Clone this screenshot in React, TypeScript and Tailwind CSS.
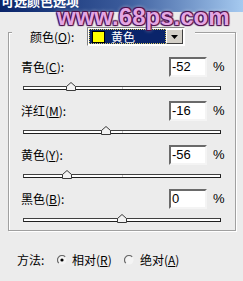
import React from "react";

type Row = { pre: string; key: string; value: number };

const rows: Row[] = [
  { pre: "青色(", key: "C", value: -52 },
  { pre: "洋红(", key: "M", value: -16 },
  { pre: "黄色(", key: "Y", value: -56 },
  { pre: "黑色(", key: "B", value: 0 },
];

const font = "font-['Noto_Sans_CJK_SC','Liberation_Sans',sans-serif]";

const Slider: React.FC<{ value: number }> = ({ value }) => (
  <div className="relative mx-[14px] mt-[9px] h-[4px] border border-t-[#404040] border-l-[#404040] border-b-[#202020] border-r-[#202020] bg-white">
    <div className="absolute left-1/2 top-0 h-full w-px bg-[#c8c8c8]" />
    <svg
      className="absolute top-[-5px] -translate-x-1/2"
      style={{ left: `${(value + 100) / 2}%` }}
      width="10"
      height="9"
      viewBox="0 0 10 9"
    >
      <path d="M0.5 8.5V4.5L5 0.5L9.5 4.5V8.5Z" fill="#f2f2f2" stroke="#3a3a3a" />
    </svg>
  </div>
);

const Radio: React.FC<{ checked?: boolean }> = ({ checked }) => (
  <svg width="10" height="10" viewBox="0 0 10 10">
    <circle cx="5" cy="5" r="4.5" fill="#f4f4f4" />
    <path d="M8.2 1.8A4.5 4.5 0 0 0 1.8 8.2" fill="none" stroke="#6a6a6a" strokeWidth="1.2" />
    {checked && <circle cx="5" cy="5" r="1.6" fill="#000" />}
  </svg>
);

export default function App() {
  return (
    <div className={`relative h-[281px] w-[243px] overflow-hidden bg-[#ececec] text-[12px] text-black ${font}`}>
      {/* title bar */}
      <div className="h-[12px] overflow-hidden bg-linear-to-r from-[#0a246a] via-[#3a5a9a] to-[#a6caf0]">
        <div className="-mt-[7px] pl-[1px] text-[13px] font-bold leading-[16px] text-white">可选颜色选项</div>
      </div>

      {/* group box */}
      <div className="ml-[8px] mt-[20px] w-[228px] border border-[#a0a0a0] pb-[8px] shadow-[inset_1px_1px_0_#fff,1px_1px_0_#fff]">
        <div className="-mt-[6px] ml-[3px] flex w-fit items-center bg-[#ececec] pl-[18px] pr-[10px]">
          <span className="w-[57px] leading-[19px]">
            颜色(<u>O</u>):
          </span>
          <div className="flex h-[19px] w-[98px] items-center border border-t-[#808080] border-l-[#808080] border-b-white border-r-white bg-white p-[1px]">
            <div className="flex h-full flex-1 items-center border border-dotted border-[#d8c860] bg-[#0a246a] pl-[2px]">
              <div className="h-[12px] w-[13px] border border-black bg-[#ffff00]" />
              <span className="ml-[6px] leading-[14px] text-white">黄色</span>
            </div>
            <div className="flex h-full w-[17px] items-center justify-center border border-t-white border-l-white border-b-[#404040] border-r-[#404040] bg-[#d4d0c8]">
              <svg width="7" height="4" viewBox="0 0 7 4">
                <path d="M0 0H7L3.5 4Z" fill="#000" />
              </svg>
            </div>
          </div>
        </div>

        {rows.map((r) => (
          <div key={r.key} className="mt-[11px]">
            <div className="flex h-[20px] items-center pl-[12px]">
              <span className="flex-1 leading-[14px]">
                {r.pre}
                <u>{r.key}</u>):
              </span>
              <div className="flex h-[20px] w-[38px] items-center border-2 border-t-[#6a6a6a] border-l-[#6a6a6a] border-b-[#f4f4f4] border-r-[#f4f4f4] bg-white pl-[1px] font-['Liberation_Sans',sans-serif] text-[13px] leading-[16px]">
                {r.value}
              </div>
              <span className="w-[28px] pl-[6px] font-['Liberation_Sans',sans-serif] text-[13px]">%</span>
            </div>
            <Slider value={r.value} />
          </div>
        ))}
      </div>

      {/* method */}
      <div className="mt-[21px] flex h-[16px] items-center pl-[17px]">
        <span className="w-[40px]">方法:</span>
        <Radio checked />
        <span className="ml-[5px] w-[41px]">
          相对(<u>R</u>)
        </span>
        <span className="ml-[11px] flex">
          <Radio />
        </span>
        <span className="ml-[6px]">
          绝对(<u>A</u>)
        </span>
      </div>

      {/* watermark */}
      <div className="absolute left-[57px] top-[5px] font-['Liberation_Sans',sans-serif] text-[24px] font-bold leading-[24px] text-[#e4a6e2] [text-shadow:0_0_1px_#4a0d4a,1px_1px_1px_#4a0d4a,-1px_-1px_1px_#4a0d4a,1px_-1px_1px_#4a0d4a,-1px_1px_1px_#4a0d4a,0_0_4px_#ffffff]">
        www.68ps.com
      </div>
    </div>
  );
}
